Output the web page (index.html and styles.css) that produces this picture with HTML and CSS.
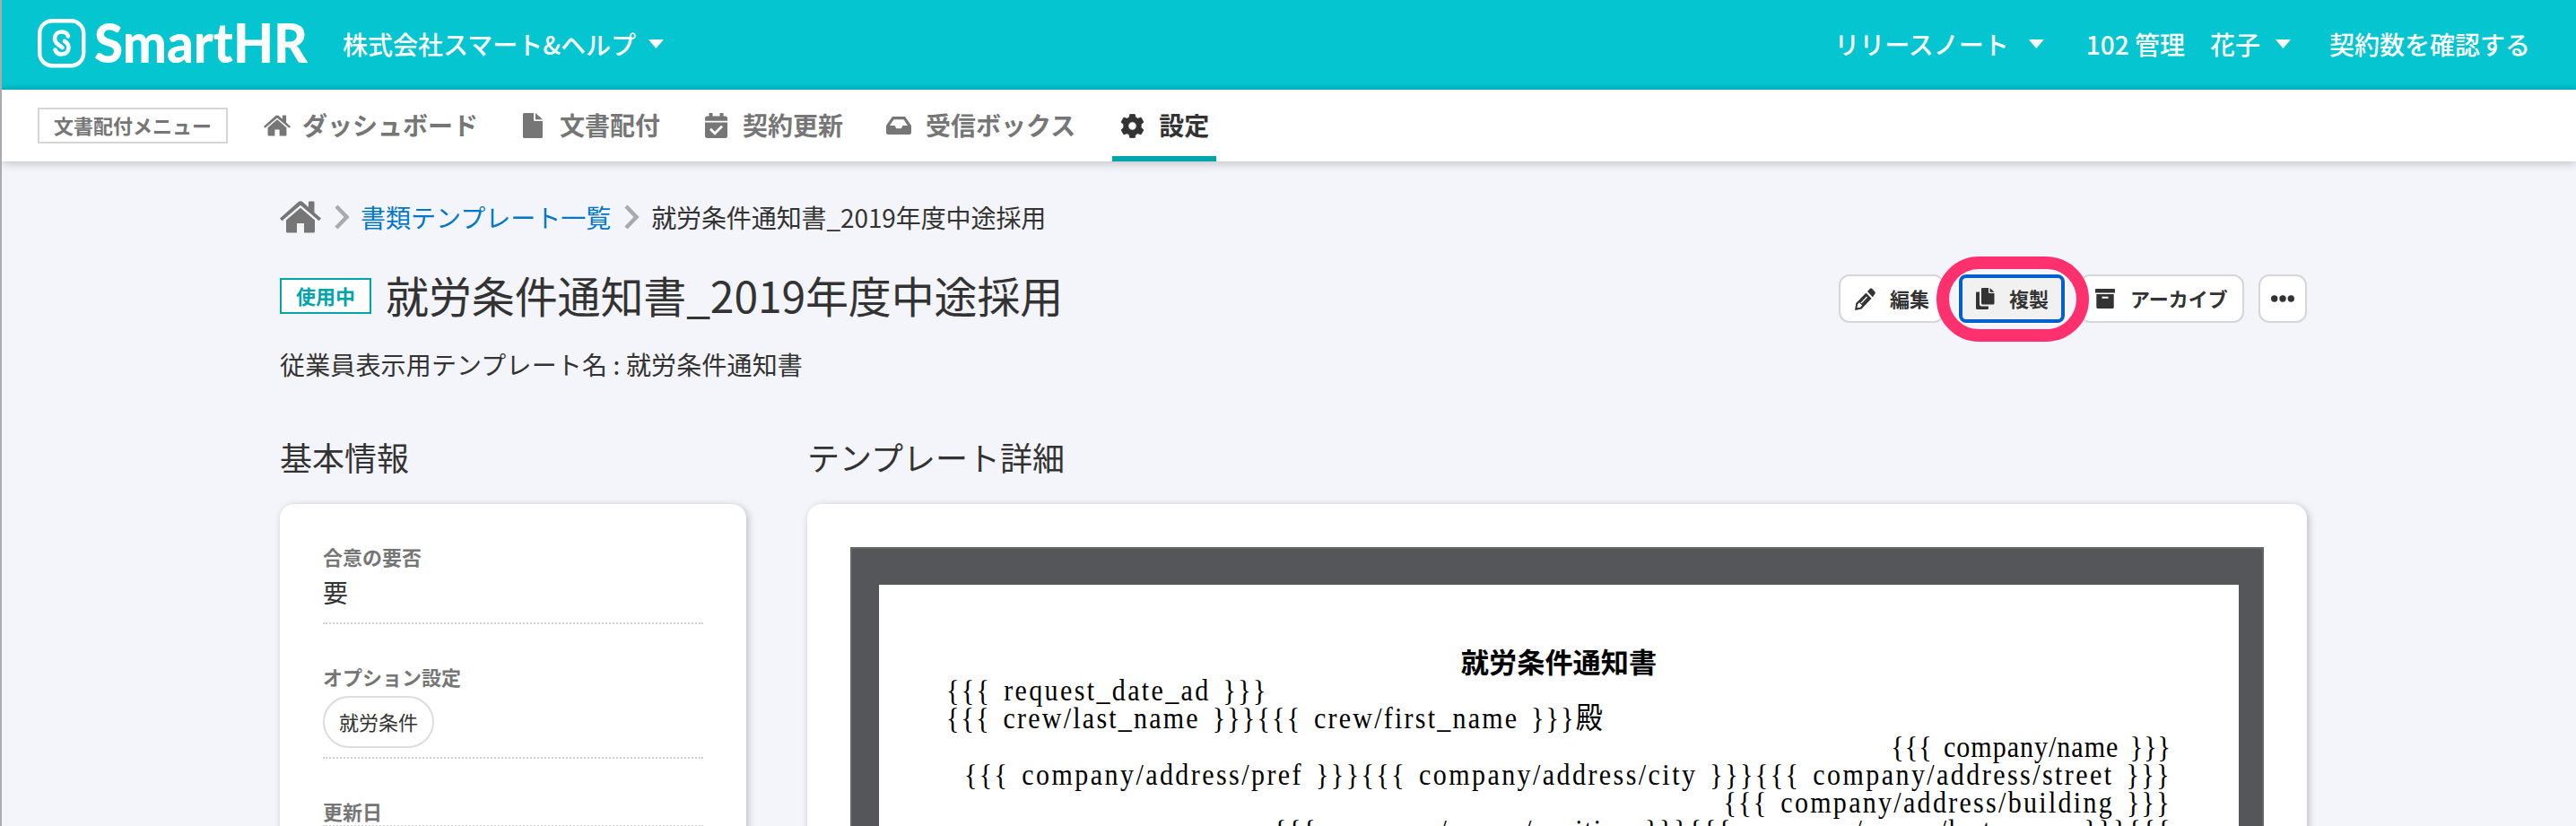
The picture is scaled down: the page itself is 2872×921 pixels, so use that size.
FILE: index.html
```html
<!DOCTYPE html>
<html lang="ja">
<head>
<meta charset="utf-8">
<title>書類テンプレート</title>
<link rel="stylesheet" href="styles.css">
</head>
<body>
<div class="window">
<header class="topbar">
  <svg class="logo" width="302" height="56" viewBox="0 0 302 56">
    <rect x="2.2" y="2.2" width="49" height="50" rx="14" fill="none" stroke="#fff" stroke-width="4.4"/>
    <path d="M34 19.5C33 16 30.500 14.500 27 14.500C22 14.500 19 18 19 22C19 25.500 21 27.500 24 29.500L27.500 32" fill="none" stroke="#fff" stroke-width="4.600" stroke-linecap="round"/>
    <path d="M19.500 34.500C20.500 38 23 39.500 26.500 39.500C31.500 39.500 34.500 36 34.500 32C34.500 28.500 32.500 26.500 30 25" fill="none" stroke="#fff" stroke-width="4.600" stroke-linecap="round"/>
    <text class="logo-text" x="63" y="48.500" textLength="238" lengthAdjust="spacingAndGlyphs">SmartHR</text>
  </svg>
  <div class="company">株式会社スマート&amp;ヘルプ<i class="caret"></i></div>
  <div class="account">
    <div class="release">リリースノート<i class="caret"></i></div>
    <div class="user">102 管理　花子<i class="caret"></i></div>
    <div class="contracts">契約数を確認する</div>
  </div>
</header>
<nav class="nav">
  <div class="menu-label">文書配付メニュー</div>
  <div class="item dash"><svg width="30" height="24" viewBox="0 0 46 36"><use href="#home"/></svg><span>ダッシュボード</span></div>
  <div class="item docs"><svg width="22" height="28" viewBox="0 0 22 28"><path d="M1.500 0H12V7.500Q12 9 13.500 9H22V26.500Q22 28 20.500 28H1.500Q0 28 0 26.500V1.500Q0 0 1.500 0ZM14 0L22 7.200H14Z"/></svg><span>文書配付</span></div>
  <div class="item renew"><svg width="25" height="28" viewBox="0 0 25 28"><path d="M4.500 0H8.500V3.500H16.500V0H20.500V3.500H22.500Q25 3.500 25 6V8.700H0V6Q0 3.500 2.500 3.500H4.500Z"/><path fill-rule="evenodd" d="M0 10.500H25V25.500Q25 28 22.500 28H2.500Q0 28 0 25.500ZM5 18.800L11 24.800L20 15.800L18 13.800L11 20.700L7 16.800Z"/></svg><span>契約更新</span></div>
  <div class="item inbox"><svg width="28" height="20" viewBox="0 0 28 20"><path fill-rule="evenodd" d="M7 0H21L28 10V17.500Q28 20 25.500 20H2.500Q0 20 0 17.500V10ZM8.500 3.300L4 10H9.500L11.200 13.300H16.800L18.500 10H24L19.500 3.300Z"/></svg><span>受信ボックス</span></div>
  <div class="item settings"><svg width="27" height="27" viewBox="-13 -13 26 26"><path stroke="currentColor" stroke-width=".8" stroke-linejoin="round" fill-rule="evenodd" d="M-2.700 -12.400H2.700L3.300 -9.300L5.800 -7.900L9.200 -9.100L12 -4.200L9.300 -1.800V1.800L12 4.200L9.200 9.100L5.800 7.900L3.300 9.300L2.700 12.400H-2.700L-3.300 9.300L-5.800 7.900L-9.200 9.100L-12 4.200L-9.300 1.800V-1.800L-12 -4.200L-9.200 -9.100L-5.800 -7.900L-3.300 -9.300ZM0 -4.500A4.500 4.500 0 1 0 0 4.500A4.500 4.500 0 1 0 0 -4.500Z"/></svg><span>設定</span></div>
</nav>
<main class="main">
  <div class="breadcrumb">
    <svg class="home" width="46" height="36" viewBox="0 0 46 36"><g id="home"><path d="M0 19.500L20.500 1.200Q23 -.8 25.500 1.200L32 7V1.500Q32 .5 33 .5H37.500Q38.500 .5 38.500 1.500V13L46 19.500L43.600 22.300L23 4.800L2.400 22.300Z"/><path d="M23 7.800L39 21.500V34Q39 35.500 37.500 35.500H27V25H19V35.500H8.500Q7 35.500 7 34V21.500Z"/></g></svg>
    <svg class="chev" width="18" height="28" viewBox="0 0 18 28"><path d="M3 2L14.500 14L3 26"/></svg>
    <span class="crumb-link">書類テンプレート一覧</span>
    <svg class="chev" width="18" height="28" viewBox="0 0 18 28"><path d="M3 2L14.500 14L3 26"/></svg>
    <span class="crumb">就労条件通知書_2019年度中途採用</span>
  </div>
  <div class="title-row">
    <span class="status">使用中</span>
    <h1 class="title">就労条件通知書_2019年度中途採用</h1>
    <div class="actions">
      <div class="btn edit"><svg width="23" height="25" viewBox="0 0 23 25"><path fill-rule="evenodd" d="M0 25L1.300 17L12.500 5.500L18.500 11.800L7.500 23.500ZM3 18.500L2.500 22.300L6 21.800L8 19.500L5 16.300ZM14 4L16.800 1Q18 -.3 19.300 1L22.300 4.200Q23.500 5.500 22.300 6.800L19.800 10.200Z"/><path d="M7 17L13.500 10" stroke="#fff" stroke-width="1.200"/></svg><span>編集</span></div>
      <div class="btn copy"><svg width="21" height="24" viewBox="0 0 21 24"><path d="M1 4.500H4V18Q4 20.500 6.500 20.500H14V22.500Q14 24 12.500 24H1.500Q0 24 0 22.500V5.500Q0 4.500 1 4.500Z"/><path d="M7 0H14V4.500Q14 6 15.500 6H20.500V17Q20.500 18.500 19 18.500H7.500Q6 18.500 6 17V1Q6 0 7 0ZM15.500 0L20.500 4.700H15.500Z"/></svg><span>複製</span><i class="marker"></i></div>
      <div class="btn archive"><svg width="22" height="22" viewBox="0 0 22 22"><path fill-rule="evenodd" d="M1 0H21Q22 0 22 1V4.500H0V1Q0 0 1 0ZM1.300 6H20.700V20.500Q20.700 22 19.200 22H2.800Q1.300 22 1.300 20.500ZM7.500 8.700V10.700H14.500V8.700Z"/></svg><span>アーカイブ</span></div>
      <div class="btn more"><svg width="26" height="8" viewBox="0 0 26 8"><circle cx="3.700" cy="4" r="3.700"/><circle cx="13" cy="4" r="3.700"/><circle cx="22.300" cy="4" r="3.700"/></svg></div>
    </div>
  </div>
  <p class="subtitle">従業員表示用テンプレート名 : 就労条件通知書</p>
  <div class="columns">
    <section class="col-info">
      <h2 class="heading">基本情報</h2>
      <div class="card info">
        <div class="field agree"><div class="label">合意の要否</div><div class="value">要</div></div>
        <div class="field option"><div class="label">オプション設定</div><span class="pill">就労条件</span></div>
        <div class="field"><div class="label">更新日</div></div>
      </div>
    </section>
    <section class="col-detail">
      <h2 class="heading">テンプレート詳細</h2>
      <div class="card detail">
        <div class="viewer"><div class="paper">
          <div class="doc-title">就労条件通知書</div>
          <div class="line l1">{{{ request_date_ad }}}</div>
          <div class="line l2">{{{ crew/last_name }}}{{{ crew/first_name }}}<span class="dono">殿</span></div>
          <div class="line right l3">{{{ company/name }}}</div>
          <div class="line right l4">{{{ company/address/pref }}}{{{ company/address/city }}}{{{ company/address/street }}}</div>
          <div class="line right l5">{{{ company/address/building }}}</div>
          <div class="line right l6">{{{ company/owner/position }}}{{{ company/owner/last_name }}}{{{</div>
        </div></div>
      </div>
    </section>
  </div>
</main>
</div>
</body>
</html>
```
FILE: styles.css
```css
* { box-sizing: border-box; margin: 0; padding: 0; }
body {
  font-family: "Noto Sans CJK JP", sans-serif;
  color: #333;
  background: #f4f5fa;
  overflow: hidden;
}
.window {
  height: 921px;
  overflow: hidden;
  border-left: 2px solid #a9abb0;
}
svg { display: block; flex: none; fill: currentColor; overflow: visible; }

.topbar {
  display: flex;
  align-items: center;
  height: 100px;
  padding: 0 51px 2px 40px;
  background: linear-gradient(#04c5d0 94px, #02bbc6 100px);
  color: #fff;
  font-size: 28px;
  line-height: 40px;
  font-weight: 500;
  white-space: nowrap;
}
.logo-text { font: 900 60px Lato, sans-serif; fill: #fff; }
.company { margin-left: 38px; display: flex; align-items: center; }
.caret {
  width: 17px;
  height: 10px;
  margin-left: 14px;
  background: #fff;
  clip-path: polygon(0 0, 100% 0, 50% 100%);
}
.account { margin-left: auto; display: flex; }
.release, .user { display: flex; align-items: center; }
.release .caret { margin-left: 22px; }
.user { margin-left: 47px; }
.user .caret { margin-left: 17px; }
.contracts { margin-left: 43px; }

.nav {
  position: relative;
  display: flex;
  align-items: center;
  height: 80px;
  padding-left: 40px;
  background: #fff;
  box-shadow: 0 2px 10px rgba(0, 0, 0, .22);
  color: #767676;
  font-size: 28px;
  font-weight: 700;
  white-space: nowrap;
}
.menu-label {
  width: 212px;
  height: 40px;
  border: 2px solid #d6d6d6;
  font-size: 22px;
  line-height: 34px;
  text-align: center;
}
.item { display: flex; align-items: center; height: 80px; }
.item span { padding-bottom: 2px; }
.dash { margin-left: 40px; gap: 13px; }
.docs { margin-left: 50px; gap: 19px; }
.renew { margin-left: 50px; gap: 17px; }
.inbox { margin-left: 48px; gap: 16px; }
.settings {
  width: 116px;
  margin-left: 41px;
  padding: 6px 0 0 9px;
  gap: 16px;
  border-bottom: 6px solid #00a5ab;
  color: #333;
}

.main { padding: 42px 300px 0 310px; }
.breadcrumb {
  display: flex;
  align-items: center;
  height: 40px;
  font-size: 28px;
  line-height: 40px;
  white-space: nowrap;
}
.home { color: #767676; }
.chev { margin-left: 14px; fill: none; stroke: #aaa; stroke-width: 4.5; }
.crumb-link { margin-left: 12px; color: #0077c7; }
.crumb { margin-left: 13px; letter-spacing: -.1px; }
.title-row { display: flex; align-items: center; height: 72px; margin-top: 32px; }
.status {
  width: 102px;
  height: 40px;
  border: 2px solid #00a5ab;
  background: #fff;
  color: #00a5ab;
  font-size: 22px;
  font-weight: 700;
  line-height: 34px;
  text-align: center;
}
.title {
  margin-left: 16px;
  padding-bottom: 4px;
  font-size: 48px;
  font-weight: 400;
  line-height: 68px;
  letter-spacing: -.12px;
  white-space: nowrap;
}
.actions { display: flex; margin: 6px 0 0 auto; }
.btn {
  position: relative;
  display: flex;
  align-items: center;
  height: 54px;
  border: 2px solid #d6d6d6;
  border-radius: 12px;
  background: #fff;
  font-size: 22px;
  font-weight: 700;
  white-space: nowrap;
}
.btn span { padding-bottom: 2px; }
.edit { width: 118px; padding-left: 16px; gap: 16px; }
.copy {
  width: 118px;
  margin-left: 16px;
  padding-left: 15px;
  gap: 16px;
  border: 4px solid #0060d0;
  border-radius: 8px;
  background: #f1f1f1;
  box-shadow: 0 0 0 2px #fff;
  z-index: 2;
}
.marker {
  position: absolute;
  left: -29px;
  top: -24px;
  width: 170px;
  height: 95px;
  border: 14px solid #ff306e;
  border-radius: 48px;
}
.archive { width: 184px; margin-left: 16px; padding-left: 16px; gap: 17px; }
.more { width: 54px; margin-left: 16px; justify-content: center; }
.subtitle { margin-top: 20px; font-size: 28px; line-height: 40px; letter-spacing: .15px; }

.columns { display: flex; gap: 68px; margin-top: 57px; }
.col-info { width: 520px; flex: none; }
.col-detail { flex: 1; min-width: 0; }
.heading { font-size: 36px; font-weight: 400; line-height: 52px; }
.card {
  height: 420px;
  margin-top: 27px;
  border-radius: 16px;
  background: #fff;
  box-shadow: 2px 2px 8px rgba(0, 0, 0, .24);
}
.info { padding: 42px 48px 0; }
.field { border-bottom: 2px dotted #d0d0d0; }
.label { color: #767676; font-size: 22px; font-weight: 700; line-height: 32px; }
.value { font-size: 28px; line-height: 40px; margin-top: 4px; }
.agree { height: 92px; }
.option { height: 150px; padding-top: 42px; }
.option + .field { padding-top: 42px; }
.pill {
  display: block;
  width: 124px;
  height: 58px;
  margin-top: 6px;
  border: 2px solid #ddd;
  border-radius: 29px;
  font-size: 22px;
  line-height: 53px;
  text-align: center;
}
.detail { padding: 48px 48px 0; }
.viewer { height: 372px; border: 2px solid #666769; background: #55565a; padding: 40px 26px 0 30px; }
.paper { height: 330px; background: #fff; color: #000; padding: 68px 75px 0; overflow: hidden; }
.doc-title {
  font-size: 31.200px;
  font-weight: 700;
  line-height: 34px;
  text-align: center;
}
.line {
  height: 31.300px;
  font-family: "Liberation Serif", "Noto Sans CJK JP", serif;
  font-size: 30px;
  line-height: 31.300px;
  word-spacing: 4px;
  white-space: nowrap;
  transform: scaleY(1.1);
}
.right { text-align: right; }
.l1 { letter-spacing: 2.370px; }
.l2 { letter-spacing: 2.220px; }
.l3 { letter-spacing: 1px; }
.l4 { letter-spacing: 2.440px; }
.l5 { letter-spacing: 2.300px; }
.l6 { letter-spacing: 1.840px; }
.dono { letter-spacing: 0; }
```
